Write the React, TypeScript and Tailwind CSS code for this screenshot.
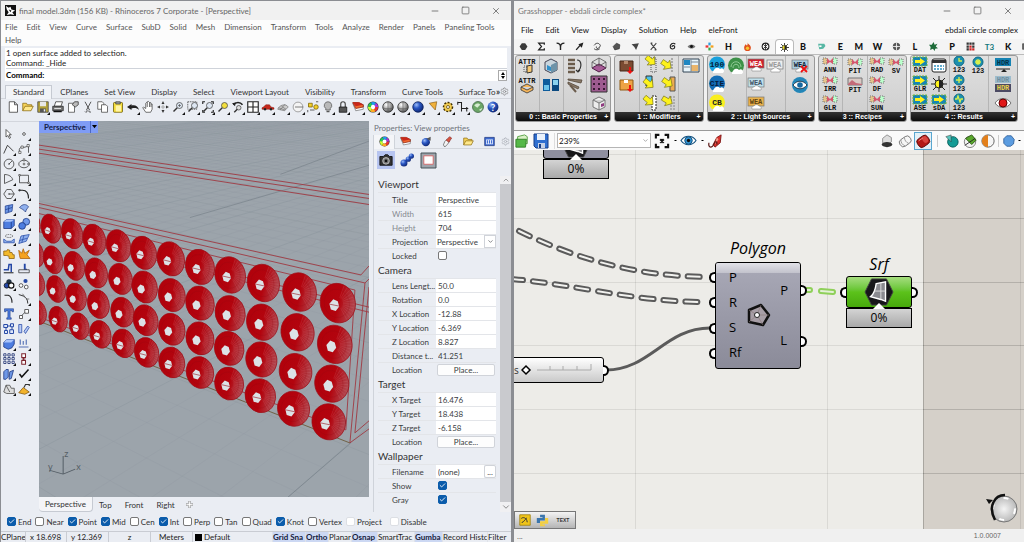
import React, { useState } from 'react';
import { Check, ChevronDown, ChevronUp, Minus, Settings, Square, X } from 'lucide-react';

const range = (n: number) => Array.from({ length: n }, (_, i) => i);

const WHEEL = ['#e33', '#fa2', '#cf3', '#2c5', '#29e', '#a3d'];

const Wheel = () => (
  <>
    <circle cx="8" cy="8" r="7.4" fill="#333" />
    {WHEEL.map((c, i) => (
      <circle key={c} cx="8" cy="8" r="4.8" fill="none" stroke={c} strokeWidth="4" strokeDasharray="5.1 25.06" strokeDashoffset={-i * 5.03} />
    ))}
    <circle cx="8" cy="8" r="2.9" fill="#fff" />
  </>
);

const Arrow = ({ t }: { t?: string }) => (
  <path transform={t} d="M1 5h7V1l7 7-7 7v-4H1z" fill="#fdf21b" stroke="#77741c" strokeWidth=".8" />
);

const Cloud = () => <path d="M4 16a3 3 0 0 1 1-3 3.500 3.500 0 0 1 6-1 2.500 2.500 0 0 1 3 4z" fill="#fff" />;

const Label = ({ y = 15, fill = '#111', size = 7, children }: { y?: number; fill?: string; size?: number; children: string }) => (
  <text x="8" y={y} textAnchor="middle" fontSize={size} fontWeight="bold" fontFamily="Liberation Mono, monospace" fill={fill}>{children}</text>
);

const Recipe = ({ name }: { name: string }) => (
  <>
    <path d="M1 1h4v6H1z" fill="#e5c48c" stroke="#777" strokeDasharray="1 1" />
    <path d="M11 1h4v6h-4z" fill="#bfc" stroke="#777" strokeDasharray="1 1" />
    <path d="M5 1l3 3 3-3v6L8 5 5 7z" fill="#d5566c" />
    <Label>{name}</Label>
  </>
);

const Result = ({ name }: { name: string }) => (
  <>
    <rect x="1" y="0" width="14" height="9" fill="#1585b5" stroke="#7ab83c" strokeDasharray="2 1" />
    <path d="M3 3h5V1l5 3.500L8 8V6H3z" fill="#fdf21b" />
    <Label>{name}</Label>
  </>
);

const Num = ({ d }: { d: string }) => (
  <>
    <circle cx="8" cy="4" r="5" fill="#1d8fae" stroke="#0d6a85" />
    <path d={d} fill="none" stroke="#d9f04a" strokeWidth="1.300" />
    <Label>123</Label>
  </>
);

const Mag = ({ fill = '#dde6f2' }: { fill?: string }) => (
  <>
    <path d="M7 9l-5 5" stroke="#333" strokeWidth="2" />
    <circle cx="10" cy="6" r="4" fill={fill} stroke="#444" />
  </>
);

const Tag = ({ bg, fg, name = 'WEA' }: { bg: string; fg: string; name?: string }) => (
  <>
    <rect x="0" y="2" width="16" height="9" fill={bg} stroke="#777" strokeWidth=".7" />
    <Label y={9} fill={fg}>{name}</Label>
    <path d="M4 14a2 2 0 0 1 2-3 3 3 0 0 1 5 0 2 2 0 0 1 2 3z" fill="#fff" stroke="#888" strokeWidth=".6" />
  </>
);

const Disc = ({ bg, fg, name }: { bg: string; fg: string; name: string }) => (
  <>
    <circle cx="8" cy="7.500" r="8" fill={bg} />
    <Label y={10} fill={fg} size={8}>{name}</Label>
    <Cloud />
  </>
);

// all glyphs are drawn on a 16 x 16 grid
const GLYPHS: Record<string, React.ReactNode> = {
  new: <path d="M3 1h7l4 4v10H3zM10 1v4h4" fill="#fff" stroke="#333" />,
  open: <><path d="M1 13V3h5l1 2h6v3" fill="#f7d358" stroke="#8a6a10" /><path d="M1 13l3-6h11l-3 6z" fill="#ffe88a" stroke="#8a6a10" /></>,
  save: <><path d="M1 1h14v14H1z" fill="#b3a13a" stroke="#444" /><path d="M4 1h8v6H4z" fill="#e8e8e8" /><path d="M4 10h8v5H4z" fill="#555" /><path d="M9 11h2v3H9z" fill="#eee" /></>,
  print: <><path d="M5 1h9l-2 6H3z" fill="#fff" stroke="#333" /><path d="M1 7h14v6H1z" fill="#777" stroke="#222" /><path d="M3 10h9" stroke="#fff" /><path d="M2 14h11" stroke="#111" strokeWidth="2" /></>,
  edit: <><path d="M2 3h8v12H2z" fill="#fff" stroke="#444" /><path d="M7 5l3-4h5v4l-4 3z" fill="#bbb" stroke="#333" /></>,
  cut: <path d="M4 1l6 11M12 1L6 12M4 14a1.500 1.500 0 1 0 2-2M12 14a1.500 1.500 0 1 1-2-2" fill="none" stroke="#444" strokeWidth="1.200" />,
  copy: <><path d="M1 1h6l2 2v8H1z" fill="#fff" stroke="#444" /><path d="M6 5h6l2 2v8H6z" fill="#fff" stroke="#444" /></>,
  paste: <><rect x="2" y="2" width="12" height="13" rx="1" fill="#f5dd3c" stroke="#665500" /><path d="M5 1h6v3H5z" fill="#999" stroke="#444" /><path d="M5 6h7v8H5z" fill="#fff4a8" /></>,
  undo: <path d="M0 8l6-4v2c5-1 9 1 10 6-3-3-6-3-10-2v2z" fill="#222" />,
  hand: <path d="M5 15L1 9l1-1 3 2V3l1-1 1 1V1l1.500-.5L10 2V2l1.500 0 .5 2 1.500 0v7l-2 4zM7 3v5M10 2v6M12 4v4" fill="#fff" stroke="#444" />,
  pan: <><path d="M8 0l2 4H6zM8 16l2-4H6zM0 8l4-2v4zM16 8l-4-2v4z" fill="#333" /><path d="M8 5v6M5 8h6" stroke="#999" /></>,
  zoom: <><Mag /><path d="M8 6h4M10 4v4" stroke="#444" strokeWidth=".8" /></>,
  zoomwin: <><path d="M1 1h12v10H1z" fill="none" stroke="#444" strokeDasharray="2 1" /><Mag /></>,
  zoomext: <><Mag /><path d="M1 4V1h3M12 1h3v3M15 12v3h-3M4 15H1v-3" fill="none" stroke="#222" strokeWidth="1.500" /></>,
  zoomsel: <Mag fill="#f3df3e" />,
  rotview: <><path d="M2 5c3-4 9-4 12 0" fill="none" stroke="#222" strokeWidth="2" /><path d="M0 3l5-1-1 5z" fill="#222" /><circle cx="9" cy="9" r="3" fill="#ddd" stroke="#444" /><path d="M7 11l-4 4" stroke="#333" strokeWidth="2" /></>,
  views: <path d="M1 1h14v14H1zM8 1v14M1 8h14" fill="#fff" stroke="#222" strokeWidth="1.500" />,
  car: <><path d="M0 9l2-1 3-3h5l2 3 4 1v2H0z" fill="#c5281c" stroke="#7a120c" strokeWidth=".6" /><circle cx="4" cy="11" r="1.600" fill="#222" /><circle cx="12" cy="11" r="1.600" fill="#222" /></>,
  mesh: <path d="M1 11c2-6 11-8 14-3l-5 5zM4 12L11 4M2 9l9 3M6 7l6 4" fill="#ccc" stroke="#666" strokeWidth=".8" />,
  clock: <><circle cx="8" cy="8" r="6.500" fill="#f4f4f4" stroke="#888" /><path d="M8 8h7M8 8L4 8" stroke="#555" /></>,
  shapes: <><path d="M2 3h5v5H2z" fill="#f4cf2a" stroke="#7a6200" /><circle cx="12" cy="8" r="3" fill="#f4cf2a" stroke="#7a6200" /><path d="M4 12h6M12 1h3M1 12v3" stroke="#333" /></>,
  bulb: <><path d="M8 1a5 5 0 0 1 3 9v2H5v-2a5 5 0 0 1 3-9z" fill="#b9b9b9" stroke="#555" /><path d="M6 13h4v2H6z" fill="#555" /></>,
  lock: <><path d="M5 8V4a3 3 0 0 1 6 0v4" fill="none" stroke="#444" strokeWidth="1.500" /><path d="M3 8h10v7H3z" fill="#555" stroke="#111" /></>,
  layers: <><path d="M1 3l4 10 10-2v-6l-9-2z" fill="#fff" stroke="#555" strokeWidth=".8" /><path d="M1 2l4 8 10-2V5L9 2z" fill="#f06b2f" stroke="#8a1c0c" /><path d="M1 2l4 5 10-2-5-3z" fill="#c9261a" /></>,
  wheel: <Wheel />,
  sphere: <><circle cx="8" cy="8" r="7" fill="url(#gGray)" stroke="#222" /><path d="M8 1v14M1 9c4 2 10 2 14 0" fill="none" stroke="#555" strokeWidth=".8" /></>,
  blue: <circle cx="8" cy="8" r="7" fill="url(#gBlue)" stroke="#0a1d55" />,
  cone: <path d="M3 3l10-2-2 11z" fill="#f0b13c" stroke="#7a4d07" strokeWidth=".8" />,
  gear: <><circle cx="8" cy="8" r="6" fill="#e3b93a" stroke="#3d2f05" strokeWidth="2" strokeDasharray="2.500 2" /><circle cx="8" cy="8" r="4.500" fill="#f2cf58" /><circle cx="8" cy="8" r="2" fill="#fff" stroke="#554208" /></>,
  dim: <path d="M1 2h5v8h9M1 1v4M13 8v6M6 10v4" fill="none" stroke="#222" strokeWidth="1.400" />,
  globe: <><circle cx="8" cy="8" r="7.300" fill="#6ba566" stroke="#3a5f3c" /><path d="M3 6c3-4 7-3 8-1l-4 4zM9 12l5-3-2 4z" fill="#d6ecd0" /></>,
  help: <><circle cx="8" cy="8" r="7.300" fill="url(#gBlue)" /><text x="8" y="13" textAnchor="middle" fontSize="13" fontWeight="bold" fill="#fff">?</text></>,
  // drawing tools
  pointer: <path d="M4 2v10l2.500-2 2 4 1.500-1-2-4h3z" fill="#fff" stroke="#333" />,
  point: <circle cx="8" cy="8" r="1.800" fill="#fff" stroke="#333" />,
  polyline: <path d="M1 14L6 3l8 8" fill="none" stroke="#333" strokeWidth="1.200" />,
  curve: <><path d="M2 12C0 2 8 9 14 3v10" fill="none" stroke="#333" /><path d="M1 11h3v3H1zM4 4h3v3H4zM12 2h3v3h-3z" fill="#fff" stroke="#333" strokeWidth=".8" /></>,
  circle: <><circle cx="8" cy="8" r="6.500" fill="none" stroke="#333" /><path d="M8 8l4-4" stroke="#333" /><circle cx="8" cy="8" r="1" fill="#333" /></>,
  ellipse: <><ellipse cx="8" cy="8" rx="7" ry="5" fill="none" stroke="#333" /><path d="M7 7h2v2H7zM7 1h2v3H7zM13 7h2v2h-2z" fill="#fff" stroke="#333" strokeWidth=".8" /></>,
  arc: <path d="M2 2v12l11-5C12 5 8 2 2 2z" fill="none" stroke="#333" />,
  rect: <><path d="M2 3h12v10H2z" fill="none" stroke="#333" /><path d="M1 2h2v2H1zM13 12h2v2h-2z" fill="#fff" stroke="#333" strokeWidth=".8" /></>,
  polygon: <><path d="M5 2h6l4 6-4 6H5L1 8z" fill="none" stroke="#333" /><path d="M8 8h7" stroke="#333" /><circle cx="8" cy="8" r="1" fill="#333" /></>,
  fillet: <><path d="M1 3h5c5 0 8 4 8 11" fill="none" stroke="#222" strokeWidth="1.500" /><circle cx="2" cy="3" r="1.500" fill="#333" /></>,
  surface: <path d="M3 4l10-2-1 9-9 3zM3 9l9-3M8 3l-1 9" fill="#6e97e6" stroke="#1f3f8f" />,
  loft: <path d="M2 6c4-5 9-5 12-1-1 2-3 3-4 7-2-3-5-4-8-6z" fill="#8fb0ee" stroke="#2a3f7f" />,
  box: <><path d="M1 5l4-3h10v8l-4 4H1z" fill="#4d7de0" stroke="#16327c" /><path d="M1 5l4-3h10l-4 3z" fill="#a9c4fa" /><path d="M11 5v9" stroke="#16327c" /></>,
  union: <><circle cx="11" cy="5" r="4.500" fill="#6f98ea" stroke="#16327c" /><circle cx="5.500" cy="10.500" r="4.500" fill="#4d7de0" stroke="#16327c" /></>,
  revolve: <><path d="M1 8v5h14V8l-4 3H5z" fill="#8fb0ee" stroke="#2a4ea8" /><ellipse cx="8" cy="4" rx="5" ry="2" fill="none" stroke="#555" strokeDasharray="2 1" /></>,
  plane: <path d="M4 4l11-2-4 9-10 3zM2 10l10-3M8 3L5 13" fill="#8fb0ee" stroke="#2a4ea8" />,
  puzzle: <path d="M1 4h4l1-2 3 1v3h3l1 3h2v5H8v-3L5 10H1z" fill="#f3b92b" stroke="#8a5c05" />,
  explode: <path d="M1 3l4 4 2-6 2 6 6-4-3 6 4 5H3l-1-4z" fill="#f5a21e" stroke="#a85d05" />,
  trim: <><path d="M1 9h6l1-7h3v10" fill="none" stroke="#2447a5" strokeWidth="2" /><path d="M1 13h13" stroke="#333" strokeWidth="1.500" /></>,
  split: <><path d="M9 1v8h3" fill="none" stroke="#2447a5" strokeWidth="2.500" /><path d="M1 9h14v4H1z" fill="#e7ebf5" stroke="#333" /></>,
  group: <><circle cx="8" cy="5" r="3.500" fill="#234" /><circle cx="5" cy="10" r="3.500" fill="#2447a5" stroke="#111" /><circle cx="11" cy="10" r="3.500" fill="#fff" stroke="#111" strokeWidth="1.500" /></>,
  ungroup: <><circle cx="10" cy="4" r="2.800" fill="#2447a5" /><circle cx="4" cy="10" r="2.500" fill="#fff" stroke="#333" /><circle cx="11" cy="12" r="2.500" fill="#fff" stroke="#333" /></>,
  extend: <path d="M2 3h5c3 1 5 5 5 10" fill="none" stroke="#222" strokeWidth="1.500" />,
  blend: <><path d="M1 2l6 2c4 2 6 5 6 10" fill="none" stroke="#222" strokeWidth="1.200" /><path d="M6 1l3 4M11 8h4" stroke="#555" /></>,
  text: <path d="M2 1h12v4h-2V3.500H9.500V13H11v2H5v-2h1.500V3.500H4V5H2z" fill="#4d7de0" stroke="#16327c" strokeWidth=".7" />,
  scale: <><path d="M2 10h4v4H2zM9 2h5v5H9z" fill="#fff" stroke="#333" /><path d="M5 10l4-4" stroke="#333" /></>,
  nodes: <path d="M1 2h5v4H1zM10 1h4v4h-4zM9 9h5v5H9zM2 10h4v4H2zM6 4h4M4 6v4M12 5v4" fill="#dfe8fb" stroke="#2447a5" strokeWidth="1.300" />,
  move: <path d="M1 2h4v11H1zM8 11l5-7 2 2-5 8z" fill="#b8cbf5" stroke="#2447a5" />,
  solid: <><path d="M1 6l4-4h10v6l-3 5-5 2-6-3z" fill="#4d7de0" stroke="#16327c" /><path d="M1 6l4-4h10l-4 4z" fill="#a9c4fa" /></>,
  align: <path d="M1 12h13M3 2v7M7 4v5M11 2v7" fill="none" stroke="#5470b5" strokeWidth="1.500" />,
  array: <path d="M1 1h3v3H1zM6.500 1h3v3h-3zM12 1h3v3h-3zM1 6h3v3H1zM6.500 6h3v3h-3zM12 6h3v3h-3zM1 11h3v3H1zM6.500 11h3v3h-3zM12 11h3v3h-3z" fill="#fff" stroke="#2b3d78" strokeWidth="1.200" />,
  copies: <path d="M5 1h5v5H5zM5 10h5v5H5zM7.500 6v4M5 8h5" fill="#fff" stroke="#7d2630" strokeWidth="1.400" />,
  flow: <path d="M1 5l3-3h3v10l-3 3H1zM9 5l5-2-3 11-3 1z" fill="#6e97e6" stroke="#16327c" />,
  check: <path d="M2 8l3 4 9-10" fill="none" stroke="#111" strokeWidth="2" />,
  cage: <path d="M1 12l3-9h5l2 4h4v7H5zM4 3l5 9" fill="#ddd" stroke="#444" />,
  paint: <><path d="M1 13l6-7 8 6-6 3z" fill="#f2b32c" stroke="#80540a" /><path d="M8 6l2-4h5v2" fill="none" stroke="#333" strokeWidth="1.500" /></>,
  camera: <><path d="M1 4h4l2-2h3l2 2h3v10H1z" fill="#333" stroke="#111" /><circle cx="8" cy="9" r="3.800" fill="#777" stroke="#ddd" strokeWidth=".8" /><circle cx="8" cy="9" r="1.500" fill="#111" /></>,
  spheres: <><circle cx="4.500" cy="11.500" r="4" fill="url(#gBlue)" /><circle cx="9.500" cy="7" r="3" fill="url(#gBlue)" /><circle cx="13" cy="3.500" r="3" fill="url(#gBlue)" /></>,
  frame: <><path d="M0 0h16v16H0z" fill="#9fa5ac" stroke="#3c4b4f" /><path d="M3 3h10v9H3z" fill="#fff" stroke="#d56a6a" /></>,
  material: <><circle cx="7" cy="9" r="6" fill="url(#gBlue)" /><path d="M8 4l6-3v6z" fill="#555" /></>,
  brush: <><path d="M2 13l2-5 3-3 4 3-3 4-4 4z" fill="#f3f3f3" stroke="#555" /><path d="M6 6l5-5 3 2-4 6z" fill="#d9533e" stroke="#833" /></>,
  info: <><path d="M1 2h14v12H1z" fill="#3e6bd0" stroke="#1a3177" /><path d="M3 5h10v7H3z" fill="#dce6fb" /><path d="M5 6v5M11 6v5M8 6v5" stroke="#3e6bd0" strokeWidth="1.500" /></>,
  // component shelf
  attr1: <><Label y={6} size={7}>ATTR</Label><path d="M5 8h3v6H5z" fill="none" stroke="#555" strokeDasharray="1 1" /><path d="M8 8l5-1v7l-5 1z" fill="#f7c873" stroke="#333" /></>,
  attr2: <><Label y={6} size={7}>ATTR</Label><path d="M2 10l6-3 6 3v3l-6 3-6-3zM2 10l6 3 6-3" fill="#f7b65a" stroke="#333" strokeWidth=".8" /></>,
  room: <><path d="M2 4l6-3 6 3v8l-6 3-6-3z" fill="#c9d5dd" stroke="#445" /><path d="M8 7l6-3v8l-6 3z" fill="#6f93a8" /><path d="M4 7l4 2v4l-4-1z" fill="#2f8fc9" /></>,
  windows: <><path d="M0 2h7v12H0z" fill="#0d5c9c" /><path d="M1 8h5v5H1z" fill="#6ac3ea" /><path d="M9 2h7v12H9z" fill="#0b4a80" /><path d="M10 3h5v5h-5z" fill="#8bd3ef" /></>,
  stack: <><path d="M1 2h7M1 6h7M1 10h7M1 14h7" stroke="#6b5c4c" strokeWidth="2.500" /><path d="M10 2c5 0 5 8 1 11M9 12l2 2 2-2" fill="none" stroke="#333" strokeWidth="1.200" /></>,
  blinds: <><path d="M1 2l14 1-1 3L1 3zM1 5l11 5-1 2L1 7z" fill="#8a7a69" stroke="#54473a" strokeWidth=".8" /><path d="M3 8l6 7" stroke="#6b5c4c" strokeWidth="2" /></>,
  gridbox: <><path d="M1 11l7-4 7 4-7 4z" fill="#a75c97" stroke="#511b47" /><path d="M1 5l7-4 7 4-7 4zM1 5v6M15 5v6M8 1v6" fill="none" stroke="#555" strokeWidth=".8" /></>,
  sensors: <><path d="M0 0h16v16H0z" fill="#9e5b90" stroke="#333" />{[3, 8, 13].map(x => [3, 8, 13].map(y => <circle key={`${x}-${y}`} cx={x} cy={y} r="1.100" fill="#210a1d" />))}</>,
  cube: <><path d="M2 5l6-3 6 3v7l-6 3-6-3zM2 5l6 3 6-3M8 8v7" fill="#ededed" stroke="#777" /><path d="M10 9l3-1v3l-3 1z" fill="#8f3a80" /></>,
  pkg1: <><path d="M1 3h13v10H1z" fill="#7b4b32" stroke="#442717" /><path d="M5 3h4v3H5z" fill="#b5886b" /><path d="M10 9h2v4h2l-3 3-3-3h2z" fill="#e11" /></>,
  pkg2: <><path d="M1 3h13v10H1z" fill="#eda345" stroke="#8f5a13" /><path d="M5 3h4v3H5z" fill="#fff" /><path d="M10 8h2v4h2l-3 3-3-3h2z" fill="#e11" /></>,
  mod1: <><path d="M10 1h5v14h-5z" fill="#ddd" stroke="#555" strokeDasharray="1 1" /><Arrow t="translate(2 -2) rotate(40 8 8) scale(.8)" /></>,
  mod2: <><Arrow t="translate(-1 2) rotate(35 8 8) scale(.8)" /><path d="M12 1v14" stroke="#777" strokeDasharray="2 1" /></>,
  mod3: <><path d="M5 0h6v10H5z" fill="#4ac1e6" stroke="#333" /><Arrow t="translate(0 2) rotate(40 8 8) scale(.8)" /></>,
  mod4: <><path d="M10 1h5v14h-5z" fill="#edab53" stroke="#555" /><Arrow t="translate(0 1) rotate(35 8 8) scale(.8)" /></>,
  mod5: <><path d="M11 1h4v14h-4z" fill="#fff" stroke="#222" strokeDasharray="2 1" /><Arrow t="rotate(40 8 8) scale(.8)" /></>,
  mod6: <><path d="M11 1v14M14 1v14" stroke="#888" strokeDasharray="2 1" /><Arrow t="rotate(30 8 8) scale(.8)" /></>,
  house: <><path d="M0 1h16v13H0z" fill="#e8f4fa" stroke="#345" /><path d="M1 2h6v5H1z" fill="#1d86c2" /><path d="M8 7h7v6H8z" fill="#e9b56c" /><path d="M1 9h6M8 4h7M8 1v13" stroke="#789" /></>,
  d100: <Disc bg="#19a0dc" fg="#04203a" name="100" />,
  cie: <Disc bg="#136db5" fg="#051c3c" name="CIE" />,
  cb: <Disc bg="#f9ee1e" fg="#222" name="CB" />,
  green: <><circle cx="8" cy="7.500" r="8" fill="#3d9148" /><path d="M3 9c0-7 10-7 10 0M5 10c0-5 6-5 6 0" fill="none" stroke="#8fc995" /><Cloud /></>,
  weaRed: <Tag bg="#cf202e" fg="#fff" />,
  weaBlue: <Tag bg="#bfe0ec" fg="#456" />,
  weaGold: <Tag bg="#e9b24d" fg="#5c4313" />,
  weaGray: <Tag bg="#ededed" fg="#999" />,
  weaX: <><Tag bg="#a9cde0" fg="#123" /><path d="M9 8l6 6M15 8l-6 6" stroke="#e11" strokeWidth="1.800" /></>,
  eyeBlue: <><circle cx="8" cy="8" r="8" fill="#2386b8" /><path d="M1 8c4-5 10-5 14 0-4 5-10 5-14 0z" fill="#fff" stroke="#123" strokeWidth=".8" /><circle cx="8" cy="8" r="2.800" fill="#1668a0" /></>,
  ann: <Recipe name="ANN" />,
  irr: <Recipe name="IRR" />,
  glrR: <Recipe name="GLR" />,
  pit: <Recipe name="PIT" />,
  pit2: <><path d="M1 1h14v7H1z" fill="#d9c9c4" stroke="#777" /><path d="M1 7l4-4 4 3 6 1v1H1z" fill="#c46a78" /><Label>PIT</Label></>,
  rad: <Recipe name="RAD" />,
  df: <Recipe name="DF" />,
  sun: <Recipe name="SUN" />,
  sv: <Recipe name="SV" />,
  dat: <Result name="DAT" />,
  glr: <Result name="GLR" />,
  ase: <Result name="ASE" />,
  sda: <Result name="sDA" />,
  cal: <><rect x="1" y="2" width="14" height="13" rx="2" fill="#fff" stroke="#222" /><path d="M1 3h14v3H1z" fill="#333" /><path d="M3 9h10M3 12h10" stroke="#3292c0" strokeWidth="1.500" strokeDasharray="2 1" /></>,
  day: <><path d="M8 0v16M0 8h16M2 2l12 12M14 2L2 14" stroke="#222" /><circle cx="8" cy="8" r="4" fill="#fdf21b" stroke="#222" /><path d="M8 4a4 4 0 0 1 0 8z" fill="#222" /></>,
  n1: <Num d="M8 1v3h3" />,
  n2: <Num d="M8 1v6M5 4h6M6 2l4 4M10 2L6 6" />,
  n3: <Num d="M8 1v6M5 4h6" />,
  n4: <Num d="M4 4h2l1-3 2 6 1-3h2" />,
  hdr1: <><path d="M0 1h16v8H0z" fill="#1583b3" /><Label y={8} fill="#04324a">HDR</Label><path d="M1 12h14" stroke="#222" /><path d="M9 12l3 3H6z" fill="#222" /></>,
  hdr2: <><path d="M0 0h16v7H0z" fill="#9dbccc" /><Label y={6} fill="#6f8fa0">HDR</Label><path d="M0 8h16v8H0z" fill="#4b4a63" /><Label y={14} fill="#e7cf4c">HDR</Label></>,
  eyeRed: <><path d="M0 8c4-6 12-6 16 0-4 6-12 6-16 0z" fill="#fff" stroke="#555" strokeWidth=".8" /><circle cx="8" cy="8" r="4" fill="#e01717" stroke="#600" /></>,
  // canvas toolbar
  gopen: <><path d="M3 3l8-2 3 2v8H3z" fill="#d9f0c6" stroke="#4c9a3a" /><path d="M1 6h12l-1 9H1z" fill="#55b848" stroke="#2f7d26" /></>,
  gsave: <><path d="M1 1h14v14H3l-2-2z" fill="#2f6fd0" stroke="#173d85" /><path d="M4 1h8v6H4z" fill="#e9f1fb" /><path d="M5 10h7v5H5z" fill="#c5d1e6" /><path d="M6 11h2v4H6z" fill="#173d85" /></>,
  focus: <path d="M1 5V1h4M11 1h4v4M15 11v4h-4M5 15H1v-4M6 6l4 4M10 6l-4 4" fill="none" stroke="#111" strokeWidth="2.400" />,
  eye: <><path d="M0 8c4-6 12-6 16 0-4 6-12 6-16 0z" fill="#fff" stroke="#12507e" strokeWidth="1.200" /><circle cx="8" cy="8" r="4" fill="#3193d2" stroke="#12507e" /><circle cx="8" cy="8" r="1.800" fill="#111" /></>,
  sketch: <><path d="M6 12l4-8 5-3-1 9-6 5z" fill="#d9302c" stroke="#7c1513" /><path d="M10 4l2 2-4 6z" fill="#f4a48f" /><path d="M1 10c-1 7 4 6 6 1 1-3 4-3 3 1" fill="none" stroke="#5b1a18" strokeWidth="1.400" /></>,
  shade1: <><path d="M3 5l5-4 5 3v5l-5 4-5-3z" fill="#ddd" stroke="#888" /><ellipse cx="8" cy="12" rx="6" ry="3" fill="#333" /></>,
  shade2: <g transform="rotate(-35 8 8)"><rect x="1" y="4" width="14" height="9" rx="4" fill="#f6f6f6" stroke="#777" /><path d="M5 4c-2 3-2 6 0 9M10 4c-2 3-2 6 0 9" fill="none" stroke="#999" /></g>,
  shade3: <g transform="rotate(-35 8 8)"><rect x="1" y="3" width="14" height="11" rx="4" fill="#b31a17" stroke="#5c0807" /><ellipse cx="11" cy="8" rx="3" ry="4" fill="#d8453f" /><path d="M4 5h6" stroke="#f08c86" /></g>,
  teal: <><circle cx="9" cy="9" r="6" fill="#139b95" stroke="#075a57" /><path d="M1 3l6-2v8z" fill="#59c7c0" stroke="#333" strokeWidth=".6" /></>,
  greenball: <><circle cx="8" cy="9" r="6.500" fill="#f2f2f2" stroke="#777" /><path d="M3 5l7-4 5 6-5 5z" fill="#59a82d" stroke="#27550e" /><path d="M2 13L14 5" stroke="#222" /></>,
  orange: <><circle cx="8" cy="8" r="7" fill="#f6f6f6" stroke="#555" /><path d="M8 1a7 7 0 0 0 0 14z" fill="#e3801c" /></>,
  hexblue: <path d="M5 1h6l4 5-1 6-4 3H5l-4-4 0-6z" fill="#5b9ce0" stroke="#24548f" />,
  // plug-in tabs
  t0: <path d="M5 2h6l4 6-4 6H5L1 8z" fill="#3a3a3a" />,
  t1: <path d="M13 5V2H3l5 6-5 6h10v-3" fill="none" stroke="#222" strokeWidth="2.200" />,
  t2: <path d="M1 2c4 0 7 3 7 7 0-4 3-7 7-7M8 8v6" fill="none" stroke="#222" strokeWidth="2.500" />,
  t3: <><path d="M2 14l7-8" stroke="#222" strokeWidth="2.500" /><path d="M15 1l-3 9-6-6z" fill="#222" /></>,
  t4: <path d="M2 6c4-6 9-4 11 0M13 6c-1 6-8 8-7 2M2 12c3 3 8 2 10 0" fill="none" stroke="#333" strokeWidth="1.600" />,
  t5: <path d="M2 8l6-6 6 3-1 7-8 2z" fill="#555" stroke="#222" />,
  t6: <path d="M1 4l13-2-5 12-3-5z" fill="#444" />,
  t7: <path d="M3 2l10 12M13 2L3 14M3 2h3M13 14h-3" fill="none" stroke="#444" strokeWidth="1.800" />,
  t8: <path d="M13 4C9 0 3 4 4 9s8 4 8 0-5-3-5 0" fill="none" stroke="#222" strokeWidth="2" />,
  t9: <><path d="M1 8c4-5 10-5 14 0-4 5-10 5-14 0z" fill="#777" /><circle cx="8" cy="8" r="2.500" fill="#111" /></>,
  t10: <><path d="M6 1h4v5H6z" fill="#2c9de0" /><path d="M1 6h5v4H1z" fill="#e33" /><path d="M10 6h5v4h-5z" fill="#f2a11c" /><path d="M6 10h4v5H6z" fill="#39a845" /></>,
  t12: <><path d="M8 0c1 5 6 5 6 10a6 6 0 0 1-12 0c0-3 2-4 2-6 2 1 3 2 3 3 1-2 2-4 1-7z" fill="#e0511d" /><circle cx="8" cy="11" r="3" fill="#f7c531" /></>,
  t13: <><circle cx="8" cy="8" r="6" fill="none" stroke="#222" strokeWidth="2" /><path d="M4 4l8 8M12 4l-8 8M8 2v12" stroke="#222" strokeWidth="1.500" /></>,
  t14: <><path d="M2 2l12 12M14 2L2 14M8 0v16M0 8h16" stroke="#333" strokeWidth="1.600" /><circle cx="8" cy="8" r="4" fill="#f2e126" stroke="#333" /><path d="M8 4a4 4 0 0 1 0 8z" fill="#222" /></>,
  t16: <><path d="M2 3h11l2 4-4 5-7 1z" fill="#57b7a4" /><path d="M4 6h4v3H4z" fill="#fff" /></>,
  t20: <><circle cx="8" cy="8" r="6.500" fill="#555" /><path d="M8 1v14M1 8h14" stroke="#eee" strokeWidth="1.500" /><circle cx="8" cy="8" r="2" fill="#eee" /></>,
  t22: <path d="M8 0l2 5 5-2-3 5 4 3-5 1-1 4-3-4-5 2 1-5-3-4 5 0z" fill="#1d6b39" />,
  t24: <><path d="M1 1h4v4H1zM6 1h4v4H6zM11 1h4v4h-4zM1 6h4v4H1zM11 6h4v4h-4zM1 11h4v4H1z" fill="#333" /><path d="M6 6h4v4H6zM6 11h4v4H6zM11 11h4v4h-4z" fill="#c22" /></>,
  t27: <path d="M1 3h14v10H1zM4 6h8M4 9h8" fill="#666" stroke="#333" />,
  feed: <><path d="M1 1h14v14H1z" fill="#f0c419" stroke="#9b7b06" /><path d="M4 12c0-2 2-1 3-3s2-1 3-4M3 6c2-2 7-2 8 5" fill="none" stroke="#333" strokeWidth="1.300" /></>,
  python: <><path d="M5 1h6v7H5v3H1V5h7V4H5z" fill="#3b76ad" /><path d="M11 15H5V9h6V5h4v7H8v1h3z" fill="#f3cf41" /></>,
};

const Glyph = ({ name, className = 'size-3' }: { name: string; className?: string }) => (
  <svg viewBox="0 0 16 16" className={`shrink-0 overflow-visible ${className}`} aria-hidden="true">{GLYPHS[name]}</svg>
);

const GradientDefs = () => (
  <svg className="absolute size-0" aria-hidden="true">
    <defs>
      <radialGradient id="gGray" cx=".35" cy=".3" r=".8"><stop offset="0" stopColor="#fff" /><stop offset="1" stopColor="#444" /></radialGradient>
      <radialGradient id="gBlue" cx=".35" cy=".3" r=".8"><stop offset="0" stopColor="#9dbcf7" /><stop offset=".4" stopColor="#2a57c4" /><stop offset="1" stopColor="#0b1f66" /></radialGradient>
      <radialGradient id="gKnob"><stop offset="0" stopColor="#f4f4f4" /><stop offset="1" stopColor="#b9b9b9" /></radialGradient>
      <linearGradient id="gDisc" x1="0" y1="0" x2="1" y2=".6"><stop offset="0" stopColor="#b0000a" /><stop offset=".6" stopColor="#b3040e" /><stop offset="1" stopColor="#b04850" /></linearGradient>
    </defs>
  </svg>
);

const ToolButton = ({ name, flyout = false }: { name: string; flyout?: boolean }) => (
  <button aria-label={name} className="relative flex h-[15px] w-[15px] shrink-0 items-center justify-center">
    <Glyph name={name} className="size-3" />
    {flyout && (
      <svg viewBox="0 0 3 3" className="absolute right-0 bottom-0 size-[3px]"><path d="M3 0v3H0z" fill="#111" /></svg>
    )}
  </button>
);

const WindowButtons = () => (
  <div className="flex items-center gap-[21px] text-[#666]">
    <button aria-label="Minimize"><Minus className="size-[10px]" strokeWidth={2} /></button>
    <button aria-label="Maximize"><Square className="size-[9px]" strokeWidth={2} /></button>
    <button aria-label="Close"><X className="size-[10px]" strokeWidth={2} /></button>
  </div>
);

interface TickProps {
  id: string;
  label?: string;
  checked?: boolean;
  faint?: boolean;
}

const Tick = ({ id, label, checked = false, faint = false }: TickProps) => (
  <span className="flex items-center gap-[2px]">
    <span className="relative flex size-[9px]">
      <input
        id={id}
        type="checkbox"
        defaultChecked={checked}
        className={`peer size-[9px] appearance-none rounded-[2px] border bg-white checked:border-[#0b5cab] checked:bg-[#0b5cab] ${faint ? 'border-[#dcdfe4]' : 'border-[#777]'}`}
      />
      <Check className="pointer-events-none absolute top-px left-px hidden size-[7px] text-white peer-checked:block" strokeWidth={3} />
    </span>
    {label && <label htmlFor={id}>{label}</label>}
  </span>
);

/* ---------- Rhino ---------- */

const RHINO_MENU = ['File', 'Edit', 'View', 'Curve', 'Surface', 'SubD', 'Solid', 'Mesh', 'Dimension', 'Transform', 'Tools', 'Analyze', 'Render', 'Panels', 'Paneling Tools', 'Help'];
const RHINO_TABS = ['Standard', 'CPlanes', 'Set View', 'Display', 'Select', 'Viewport Layout', 'Visibility', 'Transform', 'Curve Tools', 'Surface To'];
const TOOLBAR = ['new', 'open', 'save', 'print', 'edit', 'cut', 'copy', 'paste', 'undo', 'hand', 'pan', 'zoom', 'zoomwin', 'zoomext', 'zoomsel', 'rotview', 'views', 'car', 'mesh', 'clock', 'shapes', 'bulb', 'lock', 'layers', 'wheel', 'sphere', 'sphere', 'blue', 'cone', 'gear', 'dim', 'globe', 'help'];
const NO_FLYOUT = ['new', 'open', 'print', 'edit', 'cut', 'copy', 'paste', 'hand', 'pan', 'globe', 'pointer', 'puzzle', 'explode', 'trim', 'split', 'ungroup', 'extend', 'text', 'nodes', 'move'];
const SIDEBAR = ['pointer', 'point', 'polyline', 'curve', 'circle', 'ellipse', 'arc', 'rect', 'polygon', 'fillet', 'surface', 'loft', 'box', 'union', 'revolve', 'plane', 'puzzle', 'explode', 'trim', 'split', 'group', 'ungroup', 'extend', 'blend', 'text', 'scale', 'nodes', 'move', 'solid', 'align', 'array', 'copies', 'flow', 'check', 'cage', 'paint'];

// disc centres, one list per row, measured from the viewport's top left corner
const DISCS: [number, number][][] = [
  [[-8, 101], [12, 107], [33, 112], [55, 118], [79, 124], [104, 131], [131, 137], [160, 145], [190, 153], [223, 161], [259, 170], [297, 181]],
  [[-4, 132], [14, 138], [35, 144], [57, 151], [81, 157], [105, 165], [132, 173], [160, 181], [190, 191], [222, 200], [257, 210], [294, 222]],
  [[-3, 161], [17, 167], [37, 175], [59, 182], [83, 190], [106, 198], [132, 207], [160, 216], [189, 226], [221, 237], [255, 249], [291, 261]],
  [[-1, 190], [19, 197], [40, 204], [61, 212], [84, 221], [107, 230], [132, 240], [160, 250], [189, 261], [220, 273], [253, 286], [288, 299]],
];

const Disc3D = ({ x, y, col, row }: { x: number; y: number; col: number; row: number }) => {
  const rx = 8.8 + col * 0.78 - row * 0.25;
  const ry = 14.3 + col * 0.5 - row * 0.6;
  const h = 2.8 + col * 0.19;
  return (
    <g transform={`translate(${x} ${y})`}>
      <g transform="rotate(-15)">
        <ellipse rx={rx} ry={ry} fill="url(#gDisc)" stroke="#9e0d16" strokeWidth=".7" />
        {range(12).map(i => {
          const a = -0.9 + i * 0.2;
          return <path key={i} d={`M${rx * 0.3 * Math.cos(a)} ${ry * 0.3 * Math.sin(a)}L${rx * 0.95 * Math.cos(a)} ${ry * 0.95 * Math.sin(a)}`} stroke="#e8a5a9" strokeOpacity=".3" strokeWidth=".4" />;
        })}
        <ellipse cx="-1" rx={rx * 0.72} ry={ry * 0.72} fill="none" stroke="#8d0a12" strokeOpacity=".5" strokeWidth=".4" />
      </g>
      <g transform="translate(-3.500 2)">
        <path d={`M${-h} ${-h * 0.3}L${-h * 0.2} ${-h * 1.2}L${h * 0.7} ${-h * 0.8}L${h} ${h * 0.3}L${h * 0.3} ${h * 1.2}L${-h * 0.7} ${h * 0.9}z`} fill="#dce2e6" />
        {(row === 0 || row === 3) && <path d={`M${-h} -1L${h} 1`} stroke="#a3313b" strokeWidth=".7" />}
      </g>
    </g>
  );
};

const Scene = () => (
  <svg viewBox="0 0 328 376" preserveAspectRatio="xMinYMin slice" className="absolute inset-0 size-full">
    <g stroke="#858f97" strokeWidth=".5">
      {range(80).map(i => <path key={`a${i}`} strokeOpacity={i % 5 === 0 ? 0.6 : 0.3} d={`M-737 -91L${-400 + i * 84} 376`} />)}
      {range(60).map(i => <path key={`b${i}`} strokeOpacity={i % 5 === 0 ? 0.7 : 0.3} d={`M750 -66L${245 + (i - 50) * 68} 376`} />)}
    </g>
    <path d="M245 376L310 320M240 53L328 20M150 96L328 44" stroke="#737d85" strokeWidth=".6" fill="none" />
    <g fill="none" stroke="#a03a43" strokeWidth=".9">
      <path d="M0 24L328 73M0 28L328 77M0 32L328 83" />
      <path d="M0 82L320 153L328 144M0 86L324 161L328 157M0 92L314 168L305 307" />
      <path d="M324 161L309 320L328 306M328 165L314 310L328 298M0 106L328 185M0 110L328 190" />
      <path d="M0 195L305 307" />
      <path d="M0 199L309 320" stroke="#6c5b3c" />
    </g>
    {DISCS.map((line, row) => line.map(([x, y], col) => <Disc3D key={`${row}-${col}`} x={x} y={y} col={col} row={row} />))}
    <g stroke="#555e66" fill="none"><path d="M24 351V333M24 351L10 347M24 351L36 346" /></g>
    <g fill="#555e66" fontSize="9"><text x="25" y="334">z</text><text x="9" y="347">y</text><text x="37" y="347">x</text></g>
  </svg>
);

interface Field {
  label: string;
  value?: string;
  kind?: 'input' | 'plain' | 'select' | 'button' | 'check' | 'file';
  checked?: boolean;
  dim?: boolean;
}

const SECTIONS: { title: string; fields: Field[] }[] = [
  {
    title: 'Viewport',
    fields: [
      { label: 'Title', value: 'Perspective' },
      { label: 'Width', value: '615', dim: true },
      { label: 'Height', value: '704', dim: true },
      { label: 'Projection', value: 'Perspective', kind: 'select' },
      { label: 'Locked', kind: 'check' },
    ],
  },
  {
    title: 'Camera',
    fields: [
      { label: 'Lens Lengt...', value: '50.0' },
      { label: 'Rotation', value: '0.0' },
      { label: 'X Location', value: '-12.88' },
      { label: 'Y Location', value: '-6.369' },
      { label: 'Z Location', value: '8.827' },
      { label: 'Distance t...', value: '41.251', kind: 'plain' },
      { label: 'Location', value: 'Place...', kind: 'button' },
    ],
  },
  {
    title: 'Target',
    fields: [
      { label: 'X Target', value: '16.476' },
      { label: 'Y Target', value: '18.438' },
      { label: 'Z Target', value: '-6.158' },
      { label: 'Location', value: 'Place...', kind: 'button' },
    ],
  },
  {
    title: 'Wallpaper',
    fields: [
      { label: 'Filename', value: '(none)', kind: 'file' },
      { label: 'Show', kind: 'check', checked: true },
      { label: 'Gray', kind: 'check', checked: true },
    ],
  },
];

const FieldControl = ({ id, field }: { id: string; field: Field }) => {
  switch (field.kind) {
    case 'check':
      return <div className="flex h-full items-center pl-[2px]"><Tick id={id} checked={field.checked} /></div>;
    case 'button':
      return <button id={id} className="mx-px my-px flex h-3 w-[calc(100%-2px)] items-center justify-center rounded-[2px] border border-[#d0d3d9] bg-[#fdfdfd]">{field.value}</button>;
    case 'select':
      return (
        <div className="relative flex h-full">
          <select id={id} className="h-[13px] w-full appearance-none bg-white pl-px"><option>{field.value}</option></select>
          <span className="pointer-events-none absolute top-0 right-0 flex h-[13px] w-3 items-center justify-center border border-[#d0d3d9] bg-white"><ChevronDown className="size-[7px]" /></span>
        </div>
      );
    case 'file':
      return (
        <div className="flex h-[13px]">
          <input id={id} defaultValue={field.value} className="min-w-0 flex-1 bg-white pl-[2px]" />
          <button className="flex w-3 items-center justify-center rounded-[2px] border border-[#d0d3d9] bg-white">...</button>
        </div>
      );
    default:
      return <input id={id} defaultValue={field.value} className={`block h-[13px] w-full pl-[2px] ${field.kind === 'plain' ? 'bg-transparent' : 'bg-white'}`} />;
  }
};

const PropertiesPanel = () => (
  <section className="flex w-[138px] shrink-0 flex-col">
    <h2 className="h-[14px] pt-[2px] pl-px leading-[10px] text-[#6f747b]">Properties: View properties</h2>
    <div className="flex min-h-0 flex-1 flex-col border-l border-[#cfd3da]">
      <div className="flex h-[14px] items-center border-b border-[#d3d6dc]">
        {['wheel', 'layers', 'material', 'brush', 'open', 'info'].map(n => (
          <button key={n} aria-label={n} className={`flex h-[14px] w-[21px] shrink-0 items-center justify-center ${n === 'wheel' ? 'border-r border-[#cfd3da] bg-[#f4f5f8]' : ''}`}><Glyph name={n} className="size-[11px]" /></button>
        ))}
        <Settings className="ml-px size-[9px] text-[#a9aeb6]" />
      </div>
      <div className="flex items-center gap-[3px] py-[2px] pl-[3px]">
        <button aria-label="Camera" className="flex size-[18px] items-center justify-center bg-[#b6c4f0]"><Glyph name="camera" className="size-[14px]" /></button>
        <button aria-label="Material" className="flex size-[18px] items-center justify-center"><Glyph name="spheres" className="size-[14px]" /></button>
        <button aria-label="Frame" className="flex size-[18px] items-center justify-center"><Glyph name="frame" className="size-[15px]" /></button>
      </div>
      <div className="mt-[5px] flex min-h-0 flex-1">
        <div className="min-w-0 flex-1 pr-1 pl-1">
          {SECTIONS.map(s => (
            <div key={s.title}>
              <h3 className="flex h-4 items-center text-[10px] text-[#333]">{s.title}</h3>
              {s.fields.map(f => {
                const id = `${s.title}-${f.label}`;
                return (
                  <div key={id} className="flex h-[14px] border-t border-[#e3e5e9]">
                    <label htmlFor={id} className={`flex w-[58px] shrink-0 items-center pl-[14px] whitespace-nowrap ${f.dim ? 'text-[#85898f]' : 'text-[#3a3d42]'}`}>{f.label}</label>
                    <div className="min-w-0 flex-1 text-[#3a3d42]"><FieldControl id={id} field={f} /></div>
                  </div>
                );
              })}
            </div>
          ))}
        </div>
        <div className="flex w-[11px] flex-col items-center bg-[#f0f0f2] text-[#777]">
          <ChevronUp className="size-2 shrink-0" />
          <div className="w-full flex-1 bg-[#c9cace]" />
          <ChevronDown className="size-[10px] shrink-0" />
        </div>
      </div>
    </div>
  </section>
);

const OSNAPS: [string, boolean][] = [['End', true], ['Near', false], ['Point', true], ['Mid', true], ['Cen', false], ['Int', true], ['Perp', false], ['Tan', false], ['Quad', false], ['Knot', true], ['Vertex', false]];

const TOGGLES: { label: string; on?: boolean; w: string }[] = [
  { label: 'Grid Sna', on: true, w: 'w-[33px]' },
  { label: 'Ortho', on: true, w: 'w-[23px]' },
  { label: 'Planar', w: 'w-[23px]' },
  { label: 'Osnap', on: true, w: 'w-[26px]' },
  { label: 'SmartTrac', w: 'w-[37px]' },
  { label: 'Gumba', on: true, w: 'w-[28px]' },
  { label: 'Record Histc', w: 'w-[45px]' },
  { label: 'Filter', w: 'w-[24px]' },
];

const RhinoWindow = () => {
  const [tab, setTab] = useState('Standard');
  const [view, setView] = useState('Perspective');

  return (
    <main className="flex min-w-0 flex-col overflow-hidden border-x border-t border-[#8b8d92] bg-[#eaedf3] text-[8px] leading-[10px] text-[#222]">
      <header className="flex h-[19px] shrink-0 items-center bg-[#f1f1f1] pr-[10px] pl-1 text-[#666]">
        <svg viewBox="0 0 12 12" className="mr-[3px] size-[11px]"><path d="M0 0h12v12H0z" fill="#111" /><path d="M1 1l3 2 2-1 1 3 4 1-3 2 2 3-4-1-4 1 2-3-2-3z" fill="#fff" /><path d="M4 5l3 1-1 2z" fill="#111" /></svg>
        <h1 className="flex-1 truncate">final model.3dm (156 KB) - Rhinoceros 7 Corporate - [Perspective]</h1>
        <WindowButtons />
      </header>

      <nav className="flex shrink-0 flex-wrap gap-x-[9px] bg-[#fcfcfc] px-1 text-[#555]">
        {RHINO_MENU.map(m => <a key={m} href="#" className="h-[13px] leading-[14px]">{m}</a>)}
      </nav>

      <div className="mx-1 mt-[2px] flex h-[33px] shrink-0 flex-col bg-white pl-px text-[#222]">
        <p>1 open surface added to selection.</p>
        <p>Command: _Hide</p>
        <div className="flex h-[13px] items-center border-t border-[#cfd3da]">
          <label htmlFor="command" className="font-bold text-black">Command:</label>
          <input id="command" className="h-[10px] min-w-0 flex-1 pl-1 outline-none" />
          <span className="flex h-[11px] w-[9px] flex-col items-center justify-between border border-[#aaa] py-px">
            <svg viewBox="0 0 4 3" className="h-[3px] w-1"><path d="M0 3l2-3 2 3z" /></svg>
            <svg viewBox="0 0 4 3" className="h-[3px] w-1"><path d="M0 0l2 3 2-3z" /></svg>
          </span>
        </div>
      </div>

      <div className="mt-[4px] flex h-[14px] shrink-0 items-center border-b border-[#d3d6dd] pl-1 text-[#333]">
        {RHINO_TABS.map(t => (
          <button key={t} onClick={() => setTab(t)} className={`h-[14px] border-x border-t px-[7px] whitespace-nowrap last-of-type:border-r-0 last-of-type:pr-0 ${tab === t ? 'border-[#c6cad2] bg-[#f2f4f8]' : 'border-transparent'}`}>{t}</button>
        ))}
        <span className="ml-auto flex items-center pr-[2px] text-[9px] font-bold">»<Settings className="size-[9px] text-[#888]" /></span>
      </div>
      <div className="flex h-4 shrink-0 items-center pl-1">
        {TOOLBAR.map((n, i) => <ToolButton key={i} name={n} flyout={!NO_FLYOUT.includes(n)} />)}
      </div>

      <div className="mt-[6px] flex min-h-0 flex-1">
        <aside className="grid w-[38px] shrink-0 grid-cols-[15px_15px] content-start border-t border-[#d3d6dd] pt-1">
          {SIDEBAR.map(n => <ToolButton key={n} name={n} flyout={!NO_FLYOUT.includes(n)} />)}
        </aside>
        <div className="flex min-w-0 flex-1 flex-col">
          <div className="relative min-h-0 flex-1 overflow-hidden bg-[#9ca4ab]">
            <Scene />
            <button className="absolute top-0 left-0 flex h-3 items-center bg-[#7f9cf5] pl-[5px] font-bold text-[#14204a]">
              Perspective
              <span className="ml-1 flex h-full w-[8px] items-center justify-center border-l border-[#4c68c4]"><svg viewBox="0 0 6 4" className="w-[5px]"><path d="M0 0l3 4 3-4z" /></svg></span>
            </button>
          </div>
          <div className="flex h-[15px] shrink-0 items-center text-[#333]">
            {['Perspective', 'Top', 'Front', 'Right'].map(v => (
              <button key={v} onClick={() => setView(v)} className={`h-[15px] border-r px-[6px] ${view === v ? 'rounded-b border-b border-[#c6cad2] bg-[#f4f5f8]' : 'border-transparent'}`}>{v}</button>
            ))}
            <button aria-label="Add viewport" className="pl-1"><svg viewBox="0 0 8 8" className="size-[7px]"><path d="M3 0h2v3h3v2H5v3H3V5H0V3h3z" fill="#fff" stroke="#888" strokeWidth=".7" /></svg></button>
          </div>
        </div>
        <div className="w-1" />
        <PropertiesPanel />
      </div>

      <div className="flex h-[19px] shrink-0 items-center gap-1 pl-[6px] text-[#333]">
        {OSNAPS.map(([label, on]) => <Tick key={label} id={label} label={label} checked={on} />)}
        <Tick id="project" label="Project" faint />
        <span className="ml-1"><Tick id="disable" label="Disable" faint /></span>
      </div>

      <footer className="flex h-[11px] shrink-0 items-center overflow-hidden border-t border-[#c9ccd3] whitespace-nowrap">
        <span className="w-6">CPlane</span>
        <span className="w-[41px] border-l border-[#c9ccd3] pl-[4px]">x 18.698</span>
        <span className="w-[42px] border-l border-[#c9ccd3] pl-[4px]">y 12.369</span>
        <span className="w-[42px] border-l border-[#c9ccd3] text-center">z</span>
        <span className="w-[42px] border-l border-[#c9ccd3] text-center">Meters</span>
        <span className="flex min-w-0 flex-1 items-center gap-[2px] border-l border-[#c9ccd3] pl-[2px]"><i className="size-[7px] bg-black" />Default</span>
        {TOGGLES.map(t => (
          <button key={t.label} className={`border-l border-[#dfe2e8] text-left ${t.w} ${t.on ? 'bg-[#ccd8f3] font-bold text-[#16213d]' : ''}`}>{t.label}</button>
        ))}
      </footer>
    </main>
  );
};

/* ---------- Grasshopper ---------- */

const GH_TABS = ['t0', 't1', 't2', 't3', 't4', 't5', 't6', 't7', 't8', 't9', 't10', 'H', 't12', 't13', 't14', 'B', 't16', 'E', 'M', 'W', 't20', 'L', 't22', 'P', 't24', 'T3', 'K', 't27'];

// each shelf is a list of blocks, each block a list of three-row columns
const SHELVES: { title: string; grow: string; blocks: string[][][] }[] = [
  { title: '0 :: Basic Properties', grow: 'flex-[96]', blocks: [[['attr1', 'attr2']], [['room', 'windows']], [['stack', 'blinds']], [['gridbox', 'sensors', 'cube']]] },
  { title: '1 :: Modifiers', grow: 'flex-[89]', blocks: [[['pkg1', 'pkg2']], [['mod1', 'mod3', 'mod5'], ['mod2', 'mod4', 'mod6']], [['house']]] },
  { title: '2 :: Light Sources', grow: 'flex-[108]', blocks: [[['d100', 'cie', 'cb'], ['green']], [['weaRed', 'weaBlue', 'weaGold'], ['weaGray']], [['weaX', 'eyeBlue']]] },
  { title: '3 :: Recipes', grow: 'flex-[89]', blocks: [[['ann', 'irr', 'glrR']], [['pit', 'pit2']], [['rad', 'df', 'sun'], ['sv']]] },
  { title: '4 :: Results', grow: 'flex-[108]', blocks: [[['dat', 'glr', 'ase'], ['cal', 'day', 'sda']], [['n1', 'n3', 'n4'], ['n2']], [['hdr1', 'hdr2', 'eyeRed']]] },
];

const Grip = ({ side, className }: { side: 'left' | 'right'; className: string }) => (
  <span className={`absolute h-[11px] w-[6px] border-2 border-black bg-white ${side === 'left' ? 'rounded-l-full border-r-0' : 'rounded-r-full border-l-0'} ${className}`} />
);

const HexIcon = () => (
  <svg viewBox="0 0 32 30" className="h-[28px] w-[30px]">
    <path d="M8 1h16l7 14-7 14H8L1 15z" fill="#17171a" stroke="#444" />
    <path d="M13 6l10-2v21l-5-2-11-3c4-3 5-7 6-14z" fill="#8a8a90" stroke="#fff" strokeWidth="1.500" />
    <path d="M11 14h12M18 5v18" stroke="#ddd" />
  </svg>
);

const RuntimeBox = () => (
  <div className="relative flex h-5 items-center justify-center border border-black bg-linear-to-b from-[#d4d4d4] to-[#a9a9a9] text-[12px] leading-none text-black">
    <svg viewBox="0 0 12 6" className="absolute -top-[6px] h-[6px] w-3"><path d="M0 6l6-6 6 6z" fill="#fff" /></svg>
    0%
  </div>
);

const Canvas = () => (
  <div className="relative min-h-0 flex-1 overflow-hidden bg-[#edece8] font-[Open_Sans,sans-serif]">
    <div className="absolute inset-y-0 right-0 left-[409px] border-l border-[#a9a6a0] bg-[#d5d0c9]" />
    <svg className="absolute inset-0 size-full">
      <g stroke="#000" strokeOpacity=".08">
        {[4, 68, 132, 195, 259, 323].map(y => <line key={y} x1="0" x2="100%" y1={y + 0.5} y2={y + 0.5} />)}
        {[4, 68, 132, 195, 259, 323].map(y => <line key={`r${y}`} x1="409" x2="100%" y1={y + 0.5} y2={y + 0.5} />)}
        <path d="M121.500 0V400M313.500 0V400M506.500 0V400" />
      </g>
      {[{ w: 6, c: '#5b5b5b' }, { w: 2, c: '#f3f3f0' }].map(s => (
        <g key={s.w} fill="none" stroke={s.c} strokeWidth={s.w} strokeLinecap="round">
          <path d="M5 81C60 108 120 126 192 127" strokeDasharray="12 10" />
          <path d="M-3 129C60 134 120 152 192 152" strokeDasharray="12 10" />
        </g>
      ))}
      <path d="M92 220C136 220 151 178 196 178" fill="none" stroke="#5b5b5b" strokeWidth="3" />
      <g fill="none" strokeLinecap="round">
        <path d="M292 140h4M307 141l12 1" stroke="#8fd05a" strokeWidth="6" />
        <path d="M292 140h4M307 141l12 1" stroke="#e4f0d8" strokeWidth="2" />
      </g>
    </svg>

    <div className="absolute top-[-22px] left-[29px] w-[66px]">
      <div className="flex h-[31px] items-center justify-center overflow-hidden rounded-[3px] border border-black bg-[#8f8f9f]"><HexIcon /></div>
      <RuntimeBox />
    </div>

    <div className="absolute top-[207px] left-[-12px] flex h-[26px] w-[102px] items-center rounded-[3px] border border-black bg-linear-to-b from-white to-[#c9c9c9]">
      <span className="pl-[11px] text-[10px] text-[#333]">s</span>
      <svg viewBox="0 0 80 12" className="ml-[2px] h-3 w-20 shrink-0"><path d="M1 6l4-4 4 4-4 4z" fill="#fff" stroke="#000" strokeWidth="1.500" /><path d="M16 6h54V0M29 6V2M42 6V2M56 6V2" fill="none" stroke="#aaa" /></svg>
      <Grip side="right" className="top-[7px] -right-[6px]" />
    </div>

    <h3 className="absolute top-[88px] left-[201px] w-[86px] text-center text-[16px] leading-5 text-black italic">Polygon</h3>
    <div className="absolute top-[112px] left-[201px] h-[107px] w-[86px] rounded-[3px] border border-black bg-linear-to-b from-[#a9a9b7] to-[#8b8b99] text-[13px] leading-none text-black">
      <div className="h-[10px] rounded-t-[2px] bg-linear-to-b from-[#e2e2e8] to-[#c2c2cc]" />
      <div className="absolute top-[2px] bottom-[3px] left-[13px] flex flex-col justify-around">
        {['P', 'R', 'S', 'Rf'].map(p => <span key={p}>{p}</span>)}
      </div>
      <div className="absolute inset-y-[2px] right-3 flex flex-col justify-around"><span>P</span><span>L</span></div>
      <svg viewBox="0 0 26 26" className="absolute top-[39px] left-[29px] size-[26px]"><path d="M4 8l12-5 8 10-6 10-14-3z" fill="#a79ea6" stroke="#111" strokeWidth="2.500" strokeLinejoin="round" /><path d="M12 13L16 3M12 13l6 10M12 13L4 8M12 13l12 0M12 13l-8 7" stroke="#877" strokeWidth=".6" /><circle cx="12" cy="13" r="2.500" fill="#fff" stroke="#222" /></svg>
      <Grip side="left" className="top-[9px] -left-[7px]" />
      <Grip side="left" className="top-[34px] -left-[7px]" />
      <Grip side="left" className="top-[60px] -left-[7px]" />
      <Grip side="left" className="top-[85px] -left-[7px]" />
      <Grip side="right" className="top-[22px] -right-[7px]" />
      <Grip side="right" className="top-[73px] -right-[7px]" />
    </div>

    <h3 className="absolute top-[104px] left-[332px] w-[66px] text-center text-[16px] leading-5 text-black italic">Srf</h3>
    <div className="absolute top-[126px] left-[332px] w-[66px]">
      <div className="relative flex h-8 items-center justify-center rounded-[3px] border border-black bg-linear-to-b from-[#a5dd7d] via-[#5cc21b] to-[#47a90b]">
        <HexIcon />
        <Grip side="left" className="top-[10px] -left-[7px]" />
        <Grip side="right" className="top-[10px] -right-[7px]" />
      </div>
      <RuntimeBox />
    </div>

    <div className="absolute bottom-0 left-0 flex h-[18px] items-center gap-[3px] border border-[#777] bg-linear-to-b from-[#f4f4f4] to-[#b5b5b5] px-[2px]">
      <button aria-label="Feed" className="flex w-[15px] justify-center"><Glyph name="feed" className="size-3" /></button>
      <button aria-label="Python" className="flex w-[15px] justify-center"><Glyph name="python" className="size-[13px]" /></button>
      <button className="w-5 font-[Liberation_Sans] text-[5px] font-bold text-[#333]">TEXT</button>
    </div>

    <svg viewBox="0 0 34 32" className="absolute right-[5px] bottom-1 h-8 w-[34px]">
      <circle cx="19" cy="16" r="13" fill="url(#gKnob)" stroke="#777" />
      <circle cx="19" cy="16" r="11" fill="none" stroke="#fff" strokeWidth="2" strokeDasharray="5 12" />
      <path d="M20 2C9 2 3 14 10 27" fill="none" stroke="#111" strokeWidth="2.500" />
      <path d="M1 6l7 1-4 4z" fill="#111" />
    </svg>
  </div>
);

const GrasshopperWindow = () => (
  <main className="flex min-w-0 flex-col overflow-hidden border-t border-l-2 border-[#8b8d92] bg-[#f4f4f4] text-[8px] leading-[10px] text-[#111]">
    <header className="flex h-[19px] shrink-0 items-center bg-[#f2f2f2] pr-[11px] pl-1 text-[#777]">
      <h1 className="flex-1 truncate">Grasshopper - ebdali circle complex*</h1>
      <WindowButtons />
    </header>
    <nav className="flex h-[19px] shrink-0 items-center gap-3 bg-[#f9f9f9] pr-[6px] pl-[7px]">
      {['File', 'Edit', 'View', 'Display', 'Solution', 'Help', 'eleFront'].map(m => <a key={m} href="#">{m}</a>)}
      <span className="ml-auto">ebdali circle complex</span>
    </nav>

    <div className="-mr-3 flex h-[15px] shrink-0 items-center">
      {GH_TABS.map(t => (
        <button key={t} aria-label={t} className={`flex h-[15px] w-[19px] items-center justify-center ${t === 't14' ? 'rounded-t border border-b-0 border-[#bbb] bg-white' : ''}`}>
          {t in GLYPHS
            ? <Glyph name={t} className="size-[9px]" />
            : <span className={t === 'T3' ? 'font-bold text-[#14787c]' : 'text-[9px] font-black'}>{t}</span>}
        </button>
      ))}
    </div>

    <div className="flex shrink-0 gap-[3px] border-t border-[#bbb] bg-[#f0f0f0] pr-[6px] pb-2 pl-px">
      {SHELVES.map(s => (
        <section key={s.title} className={`min-w-0 overflow-hidden rounded-[3px] border border-[#999] bg-linear-to-b from-[#e0e0e0] to-[#cdcdcd] ${s.grow}`}>
          <div className="flex h-14 justify-between divide-x divide-[#b5b5b5]">
            {s.blocks.map((b, i) => (
              <div key={i} className="flex flex-1 justify-center">
                {b.map((col, j) => (
                  <div key={j} className="flex w-[19px] flex-col">
                    {col.map(n => <button key={n} aria-label={n} className="flex h-[19px] items-center justify-center"><Glyph name={n} className="size-4" /></button>)}
                  </div>
                ))}
              </div>
            ))}
          </div>
          <h2 className="relative flex h-[9px] items-center justify-center bg-linear-to-b from-[#333] to-[#0d0d0d] font-[Liberation_Sans] text-[7px] leading-none font-bold text-white">
            {s.title}
            <span className="absolute right-[2px]">+</span>
          </h2>
        </section>
      ))}
    </div>

    <div className="flex h-5 shrink-0 items-center border-t border-[#999] bg-[#fafafa] pr-[3px] pl-px">
      <button aria-label="Open"><Glyph name="gopen" className="size-[14px]" /></button>
      <button aria-label="Save" className="ml-1 border-r border-[#ddd] pr-[5px]"><Glyph name="gsave" className="size-4" /></button>
      <div className="relative ml-[2px] flex">
        <select aria-label="Zoom" className="h-[15px] w-[94px] appearance-none border border-[#b5b5b5] bg-white pl-px"><option>239%</option></select>
        <ChevronDown className="pointer-events-none absolute top-[4px] right-[2px] size-[7px] text-[#777]" />
      </div>
      <button aria-label="Zoom extents" className="ml-1 flex items-center gap-[5px]"><Glyph name="focus" className="size-[14px]" /><svg viewBox="0 0 4 2" className="w-[3px]"><path d="M0 0h4L2 2z" /></svg></button>
      <button aria-label="Preview" className="ml-1 flex items-center gap-[5px]"><Glyph name="eye" className="size-[15px]" /><svg viewBox="0 0 4 2" className="w-[3px]"><path d="M0 0h4L2 2z" /></svg></button>
      <button aria-label="Sketch" className="ml-1"><Glyph name="sketch" className="size-[14px]" /></button>
      <div className="ml-auto flex items-center">
        {['shade1', 'shade2', 'shade3'].map(n => (
          <button key={n} aria-label={n} className={`flex h-[18px] w-[18px] items-center justify-center ${n === 'shade3' ? 'border border-[#59a7d0] bg-[#e3f0f7]' : ''}`}><Glyph name={n} className="size-[14px]" /></button>
        ))}
        <span className="mx-[5px] h-3 w-px bg-[#ccc]" />
        {['teal', 'greenball', 'orange'].map(n => <button key={n} aria-label={n} className="flex w-[18px] justify-center"><Glyph name={n} className="size-[14px]" /></button>)}
        <span className="mx-px h-3 w-px bg-[#ccc]" />
        <button aria-label="Quality" className="flex items-center gap-[3px] pl-[3px]"><Glyph name="hexblue" className="size-3" /><svg viewBox="0 0 4 2" className="w-[3px]"><path d="M0 0h4L2 2z" /></svg></button>
      </div>
    </div>

    <Canvas />

    <footer className="flex h-[13px] shrink-0 items-center justify-between bg-[#f0f0f0] pr-[23px] pl-[3px] text-[#666]">
      <span>...</span>
      <span className="font-[Liberation_Sans] text-[7px]">1.0.0007</span>
    </footer>
  </main>
);

const App: React.FC = () => (
  <div className="grid h-screen grid-cols-2 overflow-hidden font-[Lato,sans-serif]">
    <GradientDefs />
    <RhinoWindow />
    <GrasshopperWindow />
  </div>
);

export default App;
